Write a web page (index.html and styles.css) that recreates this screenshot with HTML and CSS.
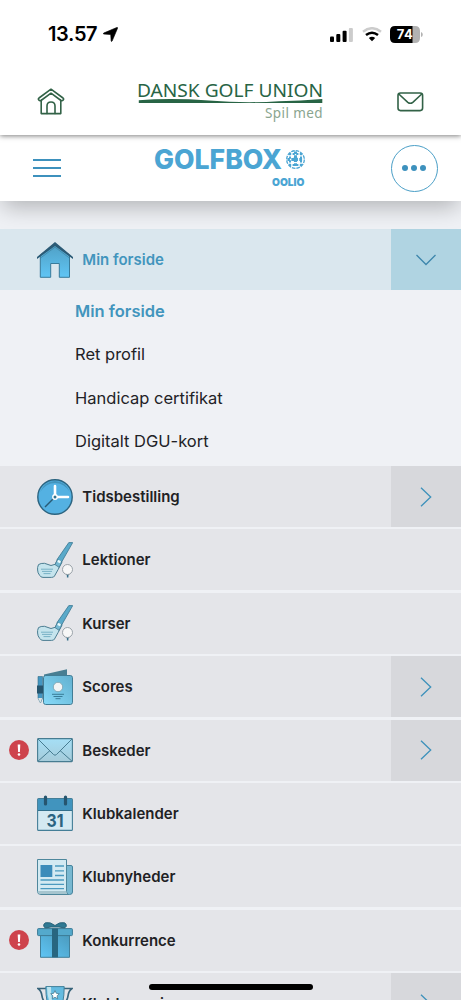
FILE: index.html
```html
<!DOCTYPE html>
<html lang="da">
<head>
<meta charset="utf-8">
<title>GolfBox</title>
<link rel="stylesheet" href="styles.css">
</head>
<body>
<svg class="defs" width="0" height="0" aria-hidden="true">
  <defs>
    <linearGradient id="blue" x1="0" y1="0" x2="0" y2="1"><stop offset="0" stop-color="#4f9fc4"/><stop offset="1" stop-color="#60c5f4"/></linearGradient>
    <linearGradient id="pale" x1="0" y1="0" x2="0" y2="1"><stop offset="0" stop-color="#a5dff6"/><stop offset="1" stop-color="#a6cbd9"/></linearGradient>
    <linearGradient id="book" x1="0" y1="1" x2="1" y2="0"><stop offset="0" stop-color="#86daf9"/><stop offset="1" stop-color="#62b0cf"/></linearGradient>
    <linearGradient id="gift" x1="0" y1="1" x2="1" y2="0"><stop offset="0" stop-color="#5fc5f5"/><stop offset="1" stop-color="#4a9abd"/></linearGradient>
    <symbol id="club" viewBox="0 0 36 36">
      <path d="M31.800.6h3.900L24.600 20l-4.600-2.400z" fill="#5aaaca" stroke="#447f99" stroke-width=".9"/>
      <path d="M20.500 18l4.400 2.200-3.700 7.200L17.500 34q-.5 1.400-3 1.400H6q-2.200 0-3.300-2Q.6 31 .6 28v-2.500q0-3.800 3.600-4l3.300-.2 6.500 2.200 4.100-1.200z" fill="#c5e4ed" stroke="#4b7d91" stroke-width="1"/>
      <path d="M20.300 17.500l4.700 2.300-2.900 5.500-4-2.600z" fill="#75b8d2" stroke="#44788e" stroke-width=".8"/>
      <path d="M20.800 18.800l2.700 1.300" stroke="#e8fafe" stroke-width="2.600"/>
      <path d="M4 27.200h12M5 29.400h10M6.500 31.600h7" stroke="#78b1c5" stroke-width="1"/>
      <path d="M28.700 32.300h4l-1.300 1.300v2h-1.500v-2z" fill="#366f89"/>
      <circle cx="30.500" cy="27.500" r="5" fill="#f7f7f7" stroke="#929ba1" stroke-width=".9"/>
    </symbol>
    <symbol id="right" viewBox="0 0 20 20"><path d="M5 .8L14.700 10 5 19.200" fill="none" stroke="#3d91bb" stroke-width="1.300"/></symbol>
    <symbol id="alert" viewBox="0 0 20 20"><circle cx="10" cy="10" r="10" fill="#ce434c"/><path d="M8.700 4.600h2.600l-.4 7.400H9.100z" fill="#fff"/><circle cx="10" cy="14.500" r="1.300" fill="#fff"/></symbol>
  </defs>
</svg>
<div class="screen">
  <header class="top">
    <div class="status">
      <span class="time">13.57</span>
      <svg class="location" viewBox="0 0 16 16"><path d="M14.800.5q1-.2.700.8L9.700 15q-.7 1-1 0L8.300 8.700Q8.200 8 7.500 7.900L.9 7.500q-1.100-.3-.2-1z" stroke="#000" stroke-width=".7"/></svg>
      <svg class="signal" viewBox="0 0 23 15"><rect y="9.500" width="4" height="5.500" rx="1"/><rect x="6.300" y="7" width="4" height="8" rx="1"/><rect x="12.600" y="3.700" width="4" height="11.300" rx="1"/><rect x="18.900" y="1" width="4" height="14" rx="1" fill="#ccc"/></svg>
      <svg class="wifi" viewBox="0 0 20 15"><g fill="none" stroke-width="2.500"><path d="M1 4.700Q10-2.200 19 4.700" stroke="#ccc"/><path d="M4 8.100q6-4.800 12 0" stroke="#000"/></g><path d="M6.800 11q3.200-2.400 6.400 0L10 14.200z"/></svg>
      <svg class="battery" viewBox="0 0 33 17"><path d="M5 0h18v17H5q-5 0-5-5V5q0-5 5-5z"/><path d="M22.500 0H25q5 0 5 5v7q0 5-5 5h-2.500zM31 6q1.800.5 1.800 2.500T31 11z" fill="#b2b2b2"/><text x="6.800" y="13.200" class="charge" textLength="16">74</text></svg>
    </div>
    <div class="union">
      <svg class="home" viewBox="0 0 28 27" fill="none" stroke="#326247" stroke-width="1.600" stroke-linejoin="round" stroke-linecap="round"><path d="M4.200 12v13.600h19.600V12M14 5.200L4 12.500q-1.300.7-2.200-.5-.9-1 .2-2L14 1.200 26 10q1.100 1 .2 2-.9 1.200-2.200.5z"/><path d="M10 25.500v-7.500q0-4 4-4t4 4v7.500"/></svg>
      <svg class="dgu" viewBox="0 0 186 40"><text x="-1" y="15" class="dgu-name" textLength="186" lengthAdjust="spacingAndGlyphs">DANSK GOLF UNION</text><path d="M.8 18.300q32-2.500 70 .3t70 .6q22-.5 43.500-2.300v4H.8z" fill="#286445"/><text x="127" y="35.500" class="dgu-tag" textLength="57.500">Spil med</text></svg>
      <svg class="mail" viewBox="0 0 27 20" fill="none" stroke="#326247" stroke-width="1.600"><rect x="1" y="1" width="24.600" height="17.600" rx="2.500"/><path d="M1.800 2l9 8.300q2.500 2 5 0l9-8.300"/></svg>
    </div>
  </header>
  <div class="brandbar">
    <div class="burger"><i></i><i></i><i></i></div>
    <svg class="golfbox" viewBox="0 0 152 40"><text x="0" y="21.300" class="gb-name" textLength="128" lengthAdjust="spacingAndGlyphs">GOLFBOX</text>
      <g fill="none" stroke="#4ba5d3"><circle cx="141.500" cy="11.500" r="8.800" stroke-dasharray="3.600 1" stroke-width="1.300"/><path d="M136 5v13M147 5v13M135 6h13M135 17h13" stroke-width="2" stroke-dasharray="2.200 1.400"/><path d="M141.500 3.500v16M133.500 11.500h16" stroke-width="3" stroke-dasharray="2.400 1.400 2.800 1.400"/></g><circle cx="141.500" cy="11.500" r="2.400" fill="#4ba5d3"/>
      <text x="118" y="38" class="gb-sub" textLength="32.500" lengthAdjust="spacingAndGlyphs">OOLIO</text></svg>
    <div class="more"><i></i><i></i><i></i></div>
  </div>
  <nav class="menu">
    <div class="row active"><span class="flag"></span>
      <svg class="icon" viewBox="0 0 36 36"><path d="M3.300 13L18 2l14.500 11v22.300H22.300V21.500h-8.600v13.800H3.300z" fill="url(#blue)" stroke="#397b9a" stroke-width="1"/><path d="M0 15L18 0l18 15v2L18 4 0 17z" fill="#2b5b76"/><path d="M3.500 16L18 5.200 32.500 16" fill="none" stroke="#397b9a" opacity=".6"/></svg>
      <span class="label">Min forside</span><span class="toggle"><svg viewBox="0 0 20 20"><path d="M.5 5l9.500 9.500L19.500 5" fill="none" stroke="#3d86ac" stroke-width="1.300"/></svg></span></div>
    <div class="sub"><a class="current">Min forside</a><a>Ret profil</a><a>Handicap certifikat</a><a>Digitalt DGU-kort</a></div>
    <div class="row"><span class="flag"></span>
      <svg class="icon" viewBox="0 0 36 36"><circle cx="18" cy="18" r="17.200" fill="#54b1e2" stroke="#2c6480" stroke-width="1.400"/><path d="M3 13Q8 2 18 2t15 11Q27 4 18 4T3 13z" fill="#347d9f" opacity=".55"/><path d="M17 19L8 28" stroke="#285b75" stroke-width="1.500"/><path d="M18 18V7M18 18h13" stroke="#fff" stroke-width="2.600" stroke-linecap="round"/><circle cx="18" cy="18" r="2.900" fill="#fff"/><circle cx="18" cy="18" r="1.500" fill="#32728e"/></svg>
      <span class="label">Tidsbestilling</span><span class="toggle"><svg><use href="#right"/></svg></span></div>
    <div class="row"><span class="flag"></span><svg class="icon"><use href="#club"/></svg><span class="label">Lektioner</span></div>
    <div class="row"><span class="flag"></span><svg class="icon"><use href="#club"/></svg><span class="label">Kurser</span></div>
    <div class="row"><span class="flag"></span>
      <svg class="icon" viewBox="0 0 36 36"><path d="M7 5.500L30 .3V10H7z" fill="#487e92"/><path d="M1 7.500h4.500V29l-2 5-2.500-5z" fill="#4496c1" stroke="#326d87" stroke-width=".6"/><path d="M1.200 29h4l-1.800 5z" fill="#dce3e2"/><path d="M0 16.500h7v8H0z" fill="#25556e"/><rect x="6.500" y="6.500" width="29" height="29" rx="2.200" fill="url(#book)" stroke="#427d95"/><circle cx="21" cy="18" r="4.700" fill="#f2f4f5" stroke="#789eac" stroke-width=".8"/><path d="M15 25.300h12M16.500 27.500h9M18.500 29.700h5" stroke="#397c98"/></svg>
      <span class="label">Scores</span><span class="toggle"><svg><use href="#right"/></svg></span></div>
    <div class="row"><span class="flag"><svg><use href="#alert"/></svg></span>
      <svg class="icon" viewBox="0 0 36 36"><rect x=".6" y="6.600" width="34.800" height="23" rx=".8" fill="url(#pale)" stroke="#477c91" stroke-width="1.100"/><path d="M1 7l15.500 15.500q1.500 1.500 3 0L35 7M1 29.200L13 18.500M35 29.200L23 18.500" fill="none" stroke="#477c91"/></svg>
      <span class="label">Beskeder</span><span class="toggle"><svg><use href="#right"/></svg></span></div>
    <div class="row"><span class="flag"></span>
      <svg class="icon" viewBox="0 0 36 36"><rect x=".6" y="3.600" width="34.800" height="31.800" rx="1" fill="#d4e9f2" stroke="#447e97" stroke-width="1.100"/><path d="M1 4h34v11.500H1z" fill="#4194be"/><path d="M1 15.500h34" stroke="#33708d"/><path d="M8.500 2v7M28.500 2v7" stroke="#26556e" stroke-width="3.200" stroke-linecap="round"/><text x="9.500" y="32" class="date" textLength="17" lengthAdjust="spacingAndGlyphs">31</text></svg>
      <span class="label">Klubkalender</span></div>
    <div class="row"><span class="flag"></span>
      <svg class="icon" viewBox="0 0 36 36"><path d="M28 6.500h6q1.500 0 1.500 1.500v25q0 2.500-3 2.500h-8z" fill="#78b8d1" stroke="#47849d"/><path d="M.5.500h29v32q0 2 2 3H4q-3.500 0-3.500-3z" fill="#d3eaf2" stroke="#4e879c"/><path d="M1 32h28l1 3H4q-3 0-3-3z" fill="#a6c5cf"/><path d="M3.500 6h11.800v12H3.500z" fill="#3b8cba"/><path d="M18 7h9M18 11.800h9M18 16.500h9M3.500 21h23.500M3.500 25.300h23.500M3.500 29.600h23.500" stroke="#4b9abf" stroke-width="1.300"/></svg>
      <span class="label">Klubnyheder</span></div>
    <div class="row"><span class="flag"><svg><use href="#alert"/></svg></span>
      <svg class="icon" viewBox="0 0 36 36"><path d="M3.500 12.500h29v22.800h-29z" fill="url(#gift)" stroke="#427f99"/><rect x=".6" y="6.600" width="34.800" height="7" rx=".8" fill="#54a9cc" stroke="#3c7b96"/><path d="M15 6.500h6v28.800h-6z" fill="#286680"/><path d="M18 3.500Q13-.5 8.500.8 6 2 6.800 4.500q.8 1.800 3.200 1.200l4-.7h8l4 .7q2.400.6 3.200-1.200.8-2.500-1.700-3.700Q23-.5 18 3.500z" fill="#307993" stroke="#245d74" stroke-width=".9"/></svg>
      <span class="label">Konkurrence</span></div>
    <div class="row"><span class="flag"></span>
      <svg class="icon" viewBox="0 0 36 36"><path d="M9 2.500H1Q4.500 5 5 10t8 13M27 2.500h8Q31.500 5 31 10t-8 13" fill="none" stroke="#38647a" stroke-width="1.700"/><path d="M8.800.6h18.400q0 18-5.200 24h-8Q8.800 18.600 8.800.6z" fill="#64bbe0" stroke="#42809a"/><path d="M10 1h4q0 12 3 22Q10 15 10 1z" fill="#bce4ef"/><path d="M18 4.500l1.300 2.800 3 .4-2.200 2.100.6 3-2.700-1.500-2.700 1.500.6-3-2.200-2.100 3-.4z" fill="#fff" stroke="#467c93" stroke-width=".8"/></svg>
      <span class="label">Klubturneringer</span><span class="toggle"><svg><use href="#right"/></svg></span></div>
  </nav>
  <div class="homebar"></div>
</div>
</body>
</html>
```

FILE: styles.css
```css
* { box-sizing: border-box; }
body { margin: 0; background: #eff1f5; font-family: Inter, "Noto Sans", sans-serif; }
svg { display: block; flex: none; }
.defs { position: absolute; }
.screen { position: relative; width: 461px; height: 1000px; overflow: hidden; }
.top { position: relative; z-index: 3; height: 135px; background: #fff; box-shadow: 0 1px 5px rgba(0,0,0,.5); }
.status { display: flex; align-items: center; height: 68px; padding: 0 38px 0 48px; }
.time { width: 50px; font-size: 20px; font-weight: 600; letter-spacing: -.35px; white-space: nowrap; }
.location { width: 15px; height: 15px; margin-left: 5px; }
.signal { width: 23px; height: 15px; margin-left: auto; }
.wifi { width: 20px; height: 15px; margin-left: 9px; }
.battery { width: 33px; height: 17px; margin-left: 8px; }
.charge { font-size: 13px; font-weight: 700; fill: #fff; }
.union { display: flex; align-items: center; justify-content: space-between; height: 67px; padding: 0 37px; }
.home { width: 28px; height: 27px; }
.dgu { width: 186px; height: 40px; overflow: visible; margin-left: 0; }
.dgu-name { font-family: "Noto Sans", sans-serif; font-size: 18px; fill: #286445; }
.dgu-tag { font-family: "Noto Sans", sans-serif; font-size: 13.5px; fill: #8aa58f; }
.mail { width: 27px; height: 20px; }
.brandbar { position: relative; z-index: 2; display: flex; align-items: center; justify-content: space-between; height: 66px; padding: 0 23.500px 0 33px; background: #fff; box-shadow: 0 9px 22px -3px rgba(0,0,0,.26); }
.burger { display: flex; flex-direction: column; gap: 6px; width: 28px; }
.burger i { height: 2px; background: #3d91bd; }
.golfbox { width: 152px; height: 40px; margin-left: 9px; overflow: visible; }
.gb-name { font-size: 26.500px; font-weight: 800; fill: #4ba5d3; }
.gb-sub { font-size: 11px; font-weight: 900; fill: #4ba5d3; }
.more { display: flex; align-items: center; justify-content: center; gap: 3px; width: 47px; height: 47px; border: 1px solid #4b9fc7; border-radius: 50%; }
.more i { width: 6px; height: 6px; border-radius: 50%; background: #3d91bd; }
.menu { padding-top: 28px; }
.row { display: flex; align-items: center; height: 61px; margin-bottom: 2.4px; background: #e4e5e9; }
.row.active { margin-bottom: 0; background: #dae7ee; }
.flag { width: 37px; padding-left: 9px; }
.flag svg { width: 20px; height: 20px; }
.icon { width: 36px; height: 36px; }
.label { margin-left: 9.300px; font-size: 15px; font-weight: 600; color: #212124; white-space: nowrap; }
.active .label { color: #4295bd; }
.toggle { display: flex; align-items: center; justify-content: center; width: 70.500px; height: 61px; margin-left: auto; background: #d7d8dc; }
.active .toggle { background: #b0d4e2; }
.toggle svg { width: 20px; height: 20px; }
.sub { display: flex; flex-direction: column; height: 176px; padding-left: 75px; }
.sub a { height: 43.400px; line-height: 43px; font-size: 16.500px; color: #222226; }
.sub .current { color: #4295bd; font-weight: 600; }
.date { font-size: 18px; font-weight: 700; fill: #2c6481; }
.homebar { position: absolute; z-index: 4; left: 149px; bottom: 10px; width: 164px; height: 6px; border-radius: 3px; background: #000; }
```
